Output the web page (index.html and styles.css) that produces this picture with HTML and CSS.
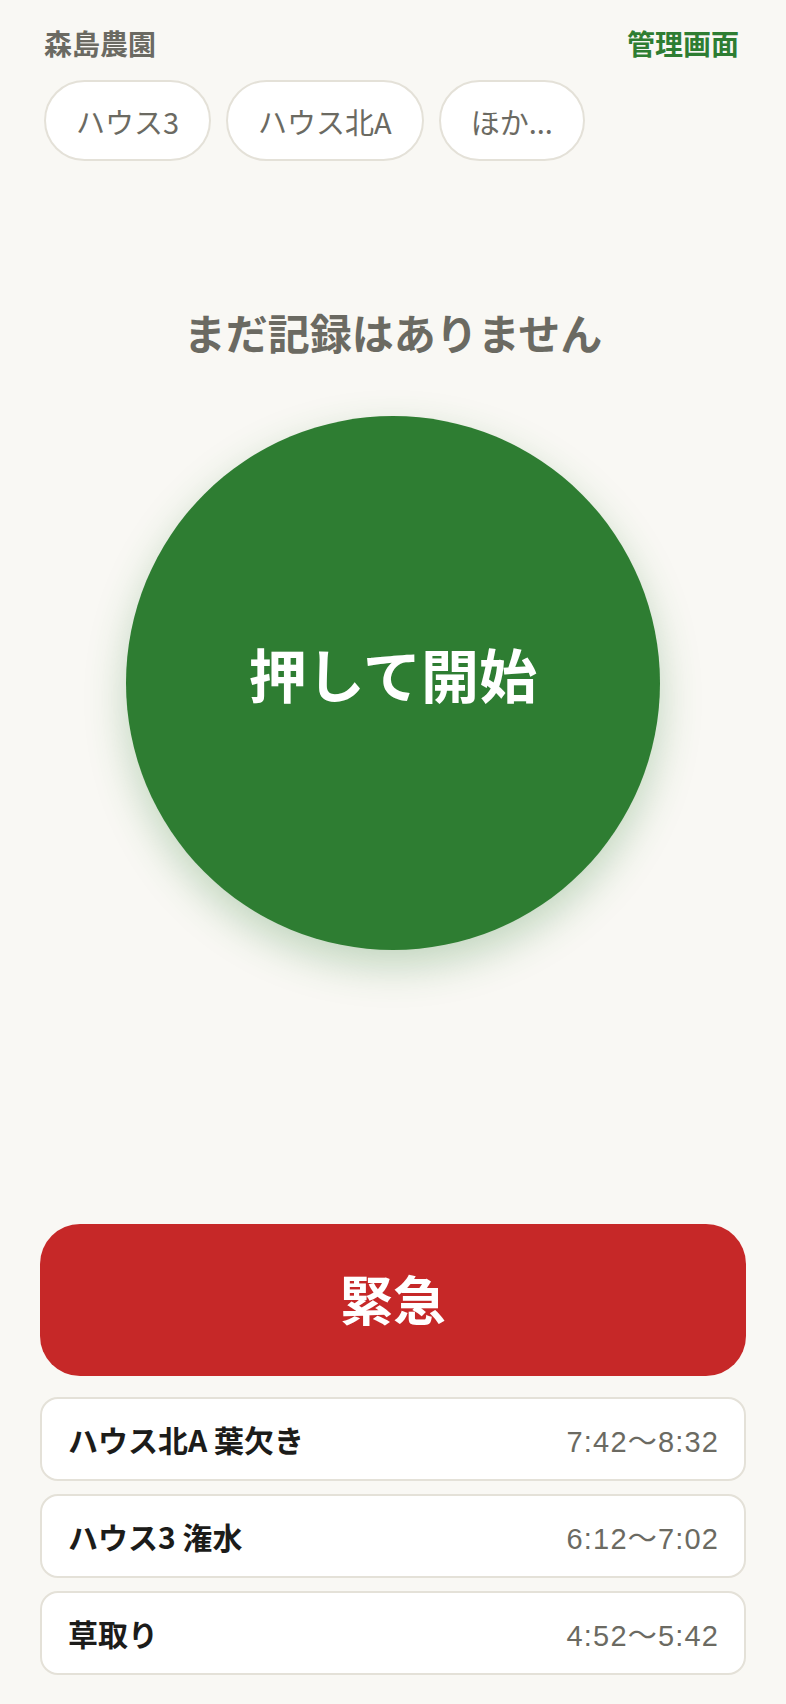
FILE: index.html
```html
<!DOCTYPE html>
<html lang="ja">
<head>
<meta charset="utf-8">
<title>森島農園</title>
<link rel="stylesheet" href="styles.css">
</head>
<body>
<div class="app">
  <header class="header">
    <div class="farm">森島農園</div>
    <a class="admin" href="#">管理画面</a>
  </header>
  <nav class="tabs">
    <button class="pill">ハウス3</button>
    <button class="pill">ハウス北A</button>
    <button class="pill">ほか...</button>
  </nav>
  <main class="main">
    <p class="status">まだ記録はありません</p>
    <button class="start">押して開始</button>
  </main>
  <section class="bottom">
    <button class="emergency">緊急</button>
    <ul class="records">
      <li class="record"><span class="task">ハウス北A 葉欠き</span><span class="time">7:42〜8:32</span></li>
      <li class="record"><span class="task">ハウス3 潅水</span><span class="time">6:12〜7:02</span></li>
      <li class="record"><span class="task">草取り</span><span class="time">4:52〜5:42</span></li>
    </ul>
  </section>
</div>
</body>
</html>
```

FILE: styles.css
```css
html, body {
  margin: 0;
  padding: 0;
  background: #f9f8f4;
}
body {
  font-family: "Noto Sans CJK JP", "Noto Sans", "Liberation Sans", sans-serif;
  color: #1c1c1a;
}
.app {
  box-sizing: border-box;
  height: 1704px;
  padding: 22px 40px 29px;
  display: flex;
  flex-direction: column;
}
.header {
  display: flex;
  justify-content: space-between;
  align-items: center;
  height: 42px;
  padding: 0 7px 0 4px;
}
.farm {
  font-size: 28px;
  font-weight: 700;
  color: #6b6a62;
  line-height: 1;
}
.admin {
  font-size: 28px;
  font-weight: 700;
  color: #2e7d32;
  text-decoration: none;
  line-height: 1;
}
.tabs {
  display: flex;
  gap: 15px;
  margin-top: 16px;
  padding-left: 4px;
}
.pill {
  box-sizing: border-box;
  height: 81px;
  padding: 0 30px;
  border: 2px solid #e4e1d8;
  border-radius: 999px;
  background: #ffffff;
  font-family: inherit;
  font-size: 29px;
  color: #6b6a62;
}
.main {
  flex: 1;
  display: flex;
  flex-direction: column;
  align-items: center;
}
.status {
  margin: 143px 0 0;
  font-size: 42px;
  line-height: 56px;
  font-weight: 700;
  color: #6b6a62;
}
.start {
  margin-top: 56px;
  width: 534px;
  height: 534px;
  padding: 0 0 20px;
  border: none;
  border-radius: 50%;
  background: #2e7d32;
  color: #ffffff;
  font-family: inherit;
  font-size: 58px;
  font-weight: 700;
  box-shadow: 0 16px 40px rgba(46, 125, 50, 0.28);
}
.bottom {
  display: flex;
  flex-direction: column;
}
.emergency {
  height: 152px;
  padding: 0 0 4px;
  border: none;
  border-radius: 40px;
  background: #c62828;
  color: #ffffff;
  font-family: inherit;
  font-size: 53px;
  font-weight: 700;
}
.records {
  list-style: none;
  margin: 21px 0 0;
  padding: 0;
  display: flex;
  flex-direction: column;
  gap: 13px;
}
.record {
  box-sizing: border-box;
  height: 84px;
  display: flex;
  justify-content: space-between;
  align-items: center;
  padding: 0 26px;
  background: #ffffff;
  border: 2px solid #e4e1d8;
  border-radius: 18px;
}
.task {
  font-size: 30px;
  font-weight: 700;
  color: #1c1c1a;
}
.time {
  font-family: "Liberation Sans", "Noto Sans CJK JP", sans-serif;
  font-size: 29px;
  letter-spacing: 1.2px;
  margin-right: -1.2px;
  color: #6b6a62;
}
```
